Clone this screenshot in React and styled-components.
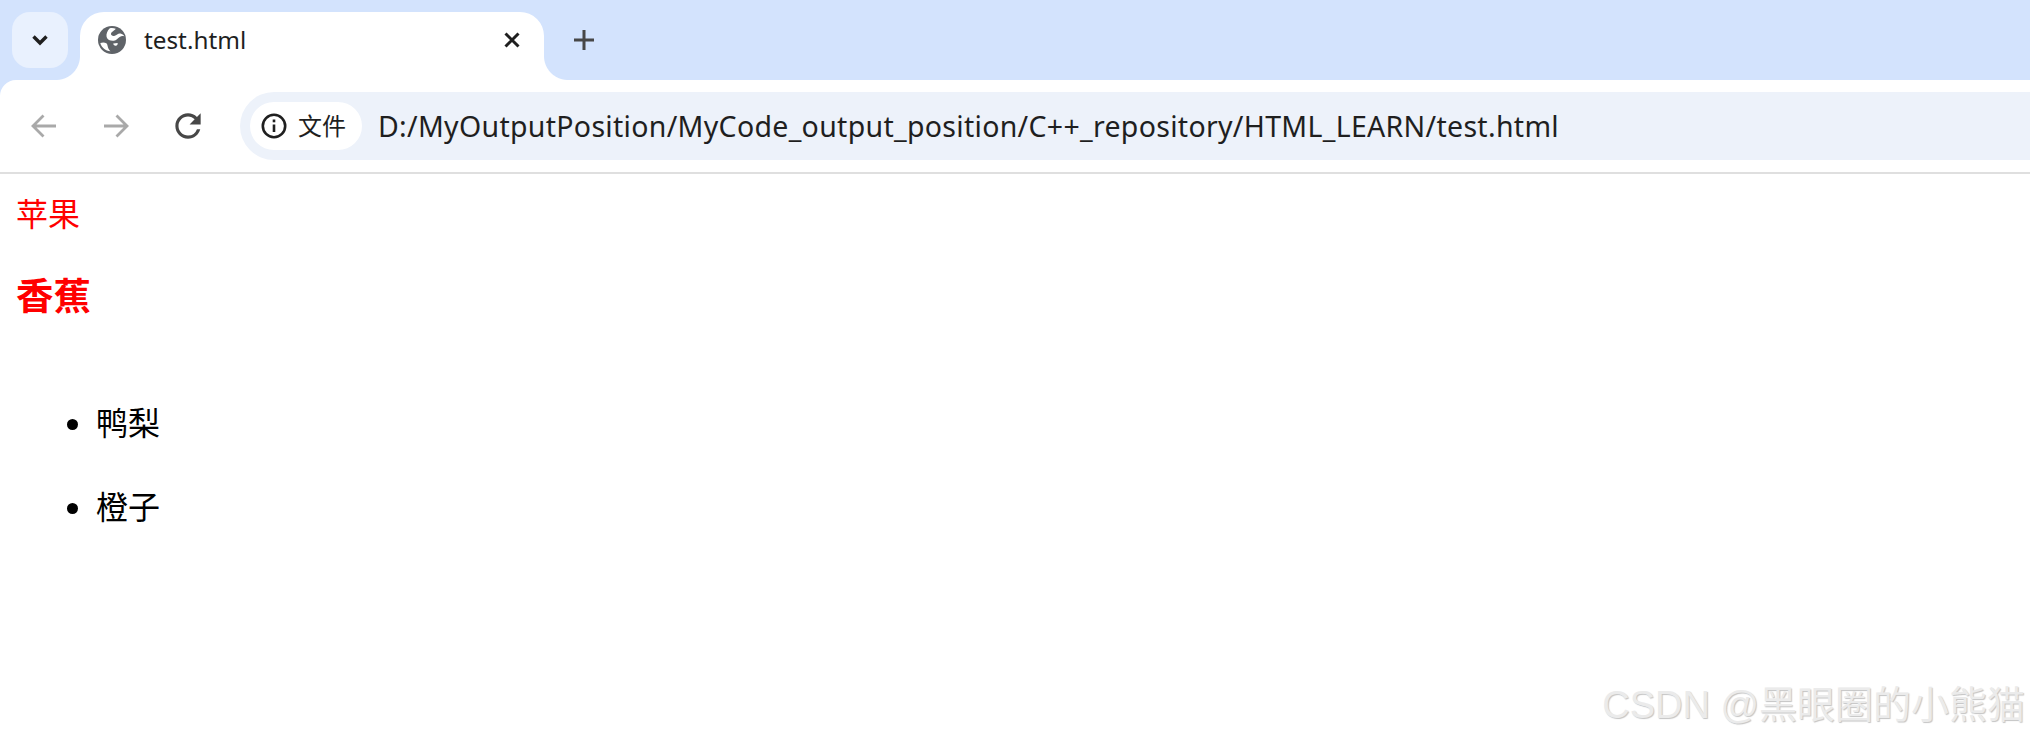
import { createGlobalStyle } from "styled-components";
import styled from "styled-components";

const cjk = `"Noto Sans", "Noto Sans CJK SC", sans-serif`;

const GlobalStyle = createGlobalStyle`
  html, body {
    margin: 0;
    padding: 0;
    background: #ffffff;
  }
  body {
    font-family: ${cjk};
    overflow: hidden;
  }
`;

const Page = styled.div`
  position: relative;
  width: 2030px;
  height: 740px;
  overflow: hidden;
  background: #ffffff;
`;

const TabStrip = styled.div`
  height: 80px;
  box-sizing: border-box;
  padding: 12px 0 0 12px;
  display: flex;
  align-items: flex-start;
  background: #d3e3fd;
`;

const TabSearch = styled.div`
  width: 56px;
  height: 56px;
  border-radius: 18px;
  background: #e9f1fe;
  display: flex;
  align-items: center;
  justify-content: center;
  color: #1f1f1f;
`;

const Tab = styled.div`
  position: relative;
  width: 464px;
  height: 68px;
  margin-left: 12px;
  box-sizing: border-box;
  padding: 0 20px 12px 18px;
  display: flex;
  align-items: center;
  background: #ffffff;
  border-radius: 24px 24px 0 0;

  &::before,
  &::after {
    content: "";
    position: absolute;
    bottom: 0;
    width: 24px;
    height: 24px;
    background: radial-gradient(circle at var(--cx) 0, transparent 23.5px, #ffffff 24.5px);
  }
  &::before {
    --cx: 0;
    left: -24px;
  }
  &::after {
    --cx: 100%;
    right: -24px;
  }
`;

const TabTitle = styled.span`
  flex: 1;
  margin-left: 18px;
  font-size: 24.3px;
  line-height: 32px;
  color: #1f1f1f;
`;

const NewTab = styled.div`
  width: 40px;
  height: 56px;
  margin-left: 20px;
  display: flex;
  align-items: center;
  justify-content: center;
  color: #474747;
`;

const ToolbarCorner = styled.div`
  background: #d3e3fd;
`;

const Toolbar = styled.div`
  height: 94px;
  box-sizing: border-box;
  padding: 12px 0 12px 20px;
  display: flex;
  align-items: stretch;
  background: #ffffff;
  border-bottom: 2px solid #dfdfdf;
  border-top-left-radius: 16px;
`;

const NavButton = styled.div`
  width: 48px;
  margin-right: 24px;
  display: flex;
  align-items: center;
  justify-content: center;
  color: ${(p) => (p.$disabled ? "#a9a9a9" : "#474747")};
`;

const AddressBar = styled.div`
  flex: 1;
  margin-left: 4px;
  padding-left: 10px;
  display: flex;
  align-items: center;
  background: #edf2fa;
  border-radius: 34px 0 0 34px;
`;

const SecurityChip = styled.div`
  width: 112px;
  height: 48px;
  box-sizing: border-box;
  padding-left: 10px;
  display: flex;
  align-items: center;
  gap: 10px;
  background: #ffffff;
  border-radius: 24px;
  color: #1f1f1f;
`;

const ChipLabel = styled.span`
  font-size: 24px;
  line-height: 32px;
`;

const Url = styled.span`
  margin-left: 16px;
  font-size: 28.5px;
  letter-spacing: 0.3px;
  line-height: 36px;
  color: #1f1f1f;
  white-space: nowrap;
`;

const Content = styled.main`
  padding: 18px 16px 0;
`;

const Fruit = styled.div`
  font-size: 32px;
  line-height: 44px;
  color: #ff0000;
`;

const Heading = styled.h2`
  margin: 35px 0 0;
  font-size: 37.4px;
  line-height: 50px;
  font-weight: 700;
  color: #ff0000;
`;

const FruitList = styled.ul`
  margin: 80px 0 0;
  padding: 0 0 0 80px;
  list-style: disc;
`;

const FruitItem = styled.li`
  font-size: 32px;
  line-height: 44px;
  color: #000000;

  & + & {
    margin-top: 40px;
  }
`;

const Watermark = styled.div`
  position: absolute;
  right: 5px;
  bottom: 12px;
  font-family: "Liberation Sans", "Noto Sans CJK SC", sans-serif;
  font-size: 38px;
  line-height: 46px;
  color: #ebebeb;
  text-shadow: 1px 1px 1px #c4c4c4;
  white-space: nowrap;
`;

const Chevron = () => (
  <svg width="24" height="24" viewBox="0 0 24 24" fill="none" stroke="currentColor" strokeWidth="3.4">
    <path d="M5.500 8.500 12 15l6.500-6.500" />
  </svg>
);

const Globe = () => (
  <svg width="28" height="28" viewBox="0 0 28 28">
    <circle cx="14" cy="14" r="14" fill="#5f6368" />
    <path
      d="M11.500 2.400c2-.5 4.400-.3 6.200.4-1 1.900-4.400 2.800-4.700 4.900-.2 1.800 2 2.600 3.700 2 2-.7 3.500-2.700 5.800-2.200 1.700.4 3 1.300 3.900 2.900-1.600-.5-3.200-.4-4.700.6-2 1.300-3.300 3.300-5.800 3.700-2.700.4-6.500-.6-7.300-3.700-.7-3 .9-6.600 2.900-8.600Z"
      fill="#ffffff"
    />
    <path
      d="M2.300 17c1.900-.7 4.400-.9 6 .3 1.300 1 1.200 2.700 1.700 4.200.4 1.400 1.400 2.700 2.500 3.800-4.800-.5-9-3.500-10.200-8.300Z"
      fill="#ffffff"
    />
    <path
      d="M15.200 17.600c1.400-.1 2.800-.6 4.400-.7.500 1.100-.5 2.700-1.900 2.900-1.200.2-2.300-.8-2.500-2.200Z"
      fill="#ffffff"
    />
  </svg>
);

const Close = () => (
  <svg width="24" height="24" viewBox="0 0 24 24" fill="none" stroke="#1f1f1f" strokeWidth="3">
    <path d="M5.500 5.500 18.500 18.500M18.500 5.500 5.500 18.500" />
  </svg>
);

const Plus = () => (
  <svg width="24" height="24" viewBox="0 0 24 24" fill="none" stroke="currentColor" strokeWidth="3">
    <path d="M12 2v20M2 12h20" />
  </svg>
);

const Back = () => (
  <svg width="28" height="28" viewBox="0 0 28 28" fill="none" stroke="currentColor" strokeWidth="2.800">
    <path d="M26 14H3.500M13.500 3.500 3 14l10.500 10.500" />
  </svg>
);

const Forward = () => (
  <svg width="28" height="28" viewBox="0 0 28 28" fill="none" stroke="currentColor" strokeWidth="2.800">
    <path d="M2 14h22.500M14.500 3.500 25 14 14.500 24.500" />
  </svg>
);

const Reload = () => (
  <svg width="38" height="38" viewBox="0 0 24 24" fill="currentColor">
    <path d="M17.650 6.350A7.958 7.958 0 0 0 12 4c-4.420 0-7.990 3.580-7.990 8s3.570 8 7.990 8c3.730 0 6.840-2.550 7.730-6h-2.080A5.990 5.990 0 0 1 12 18c-3.310 0-6-2.690-6-6s2.690-6 6-6c1.660 0 3.140.690 4.220 1.780L13 11h7V4l-2.350 2.350z" />
  </svg>
);

const Info = () => (
  <svg width="28" height="28" viewBox="0 0 28 28" fill="none" stroke="currentColor" strokeWidth="2.600">
    <circle cx="14" cy="14" r="11.200" />
    <path d="M14 12.500v7.500" />
    <path d="M14 7.500v2.800" />
  </svg>
);

export default function App() {
  return (
    <Page>
      <GlobalStyle />
      <TabStrip>
        <TabSearch>
          <Chevron />
        </TabSearch>
        <Tab>
          <Globe />
          <TabTitle>test.html</TabTitle>
          <Close />
        </Tab>
        <NewTab>
          <Plus />
        </NewTab>
      </TabStrip>
      <ToolbarCorner>
        <Toolbar>
          <NavButton $disabled>
            <Back />
          </NavButton>
          <NavButton $disabled>
            <Forward />
          </NavButton>
          <NavButton>
            <Reload />
          </NavButton>
          <AddressBar>
            <SecurityChip>
              <Info />
              <ChipLabel>文件</ChipLabel>
            </SecurityChip>
            <Url>D:/MyOutputPosition/MyCode_output_position/C++_repository/HTML_LEARN/test.html</Url>
          </AddressBar>
        </Toolbar>
      </ToolbarCorner>
      <Content>
        <Fruit>苹果</Fruit>
        <Heading>香蕉</Heading>
        <FruitList>
          <FruitItem>鸭梨</FruitItem>
          <FruitItem>橙子</FruitItem>
        </FruitList>
      </Content>
      <Watermark>CSDN @黑眼圈的小熊猫</Watermark>
    </Page>
  );
}
